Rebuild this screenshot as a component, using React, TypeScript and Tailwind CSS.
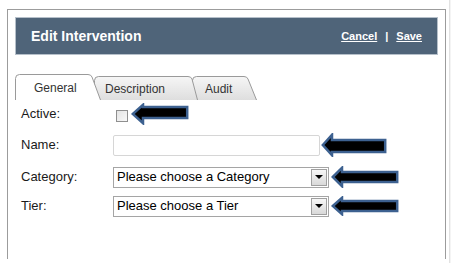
import React from "react";

const FONT = { fontFamily: '"Liberation Sans", Arial, sans-serif' };

// left-pointing annotation arrow, black fill with a blue outline
function Arrow({ w, h, head, top, bot }: { w: number; h: number; head: number; top: number; bot: number }) {
  const mid = h / 2;
  const d = `M1.8 ${mid} L${head} 1.8 L${head} ${top} L${w - 1.8} ${top} L${w - 1.8} ${bot} L${head} ${bot} L${head} ${h - 1.8} Z`;
  return (
    <svg width={w} height={h} viewBox={`0 0 ${w} ${h}`} className="shrink-0">
      <path d={d} fill="#000" stroke="#3d6190" strokeWidth="2.5" strokeLinejoin="miter" />
    </svg>
  );
}

function Tab({ label, w, h, slant, active, padL, z }: { label: string; w: number; h: number; slant: number; active?: boolean; padL: number; z: string }) {
  const path = `M0.5 ${h} L0.5 4.5 Q0.5 0.5 4.5 0.5 L${w - slant - 3} 0.5 Q${w - slant} 0.5 ${w - slant + 1} 3 L${w - 0.5} ${h}`;
  return (
    <div className={`relative ${z}`} style={{ width: w, height: h }}>
      <svg width={w} height={h} className="absolute inset-0">
        <defs>
          <linearGradient id="tabg" x1="0" y1="0" x2="0" y2="1">
            <stop offset="0" stopColor="#f6f6f6" />
            <stop offset="1" stopColor="#dedede" />
          </linearGradient>
        </defs>
        <path d={path + " Z"} fill={active ? "#ffffff" : "url(#tabg)"} stroke="none" />
        <path d={path} fill="none" stroke="#9a9a9a" strokeWidth="1" />
      </svg>
      <div
        className="relative flex h-full items-center pt-[1px] text-[12px] text-[#333]"
        style={{ paddingLeft: padL }}
      >
        {label}
      </div>
    </div>
  );
}

function Select({ text }: { text: string }) {
  return (
    <div className="flex h-[21px] w-[216px] items-center justify-between border border-[#a5a5a5] bg-white pl-[3px] pr-[1px] text-[13px] text-black">
      <span>{text}</span>
      <div className="flex h-[17px] w-[16px] items-center justify-center border border-[#a0a0a0] bg-gradient-to-b from-[#f7f7f7] to-[#d9d9d9]">
        <div className="h-0 w-0 border-x-[4px] border-t-[4px] border-x-transparent border-t-black" />
      </div>
    </div>
  );
}

export default function App() {
  return (
    <div className="flex h-[263px] w-[451px] overflow-hidden bg-white" style={FONT}>
      <div className="w-[449px] pl-[7px] pt-[9px]">
        <div className="h-[250px] w-[439px] border-x border-t border-[#9c9c9c] px-[7px] pt-[7px]">
          {/* Header bar */}
          <div className="flex h-[38px] items-center justify-between border border-[#b6c0ca] bg-[#4f6479] pl-[15px] pr-[15px] text-white">
            <span className="text-[14px] font-bold">Edit Intervention</span>
            <div className="flex items-center gap-[8px] text-[11px] font-bold">
              <span className="underline">Cancel</span>
              <span>|</span>
              <span className="underline">Save</span>
            </div>
          </div>

          {/* Tabs */}
          <div className="mt-[19px] flex items-end">
            <Tab label="General" w={86} h={26} slant={10} active padL={19} z="z-30" />
            <Tab label="Description" w={104} h={24} slant={7} padL={11} z="z-20 -ml-[7px]" />
            <Tab label="Audit" w={65} h={24} slant={10} padL={13} z="z-10 -ml-[6px]" />
          </div>

          {/* Form */}
          <div className="pl-[6px] text-[13px] text-[#1a1a1a]">
            <div className="mt-[2px] flex h-[24px] items-center">
              <span className="w-[95px]">Active:</span>
              <div className="mt-[4px] h-[12px] w-[12px] border border-[#8f8f8f] bg-gradient-to-br from-[#e4e4e4] to-[#f8f8f8]" />
              <div className="ml-[3px]">
                <Arrow w={58} h={22} head={12} top={4} bot={15} />
              </div>
            </div>

            <div className="mt-[7px] flex h-[24px] items-center">
              <span className="w-[92px]">Name:</span>
              <div className="h-[21px] w-[207px] rounded-[2px] border border-[#d6d6d6] bg-white" />
              <div className="ml-[1px]">
                <Arrow w={66} h={24} head={11} top={7} bot={19} />
              </div>
            </div>

            <div className="mt-[8px] flex h-[24px] items-center">
              <span className="w-[92px]">Category:</span>
              <Select text="Please choose a Category" />
              <div className="ml-[2px]">
                <Arrow w={68} h={22} head={11} top={6} bot={16} />
              </div>
            </div>

            <div className="mt-[6px] flex h-[22px] items-center">
              <span className="w-[92px]">Tier:</span>
              <Select text="Please choose a Tier" />
              <div className="ml-[2px]">
                <Arrow w={68} h={20} head={11} top={5} bot={15} />
              </div>
            </div>
          </div>
        </div>
      </div>
      <div className="w-[2px] border-l border-[#e2e2e2] bg-[#f4f4f4]" />
    </div>
  );
}
